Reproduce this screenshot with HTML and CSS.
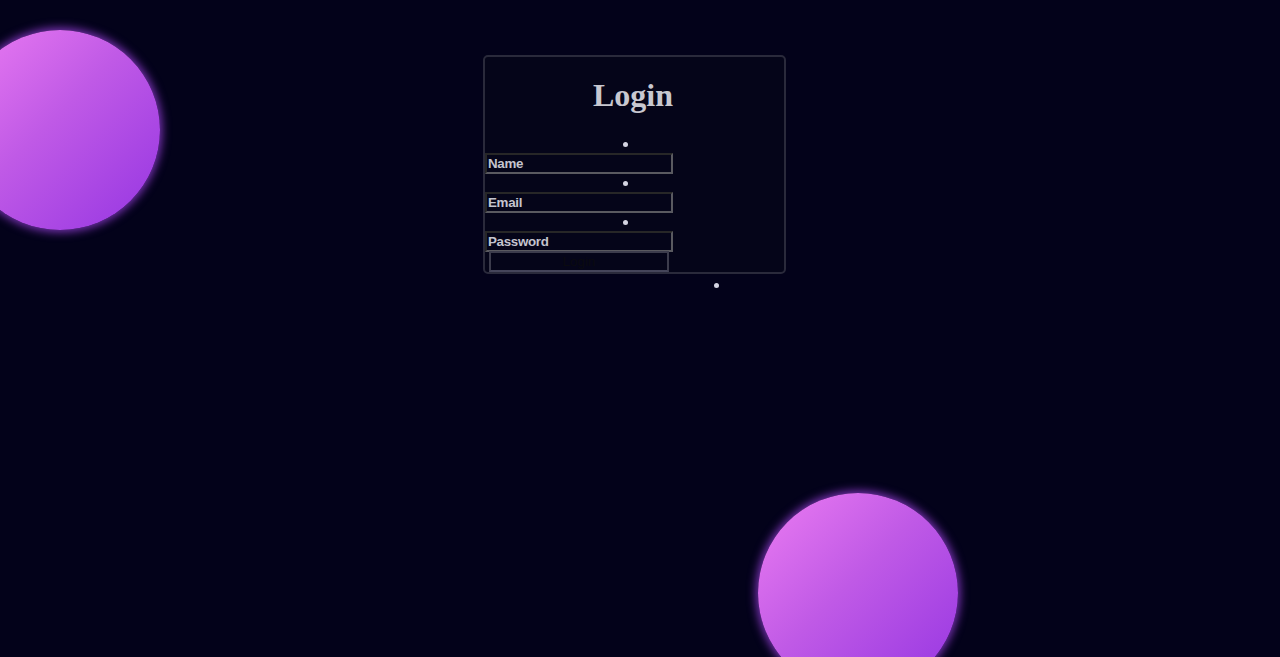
FILE: index.html
```html
<!DOCTYPE html>
<html lang="en">
<head>
<meta charset="utf-8">
<title>Login</title>
<link rel="stylesheet" href="styles.css">
</head>
<body>
  <div class="blob blob-top"></div>
  <div class="blob blob-bottom"></div>
  <main class="wrap">
    <form class="card">
      <h1 class="title">Login</h1>
      <ul class="fields">
        <li class="field"><input class="input" type="text" placeholder="Name"></li>
        <li class="field"><input class="input" type="email" placeholder="Email"></li>
        <li class="field"><input class="input" type="password" placeholder="Password"></li>
      </ul>
      <button class="btn" type="submit">Login</button>
    </form>
    <div class="tail"><span class="dot"></span></div>
  </main>
</body>
</html>
```

FILE: styles.css
```css
html, body {
  margin: 0;
  padding: 0;
}
body {
  background: #03021a;
  font-family: "Liberation Sans", Arial, sans-serif;
  color: #c4c4cc;
  min-height: 100vh;
  position: relative;
}
.blob {
  position: absolute;
  width: 200px;
  height: 200px;
  border-radius: 50%;
  background: linear-gradient(135deg, #ec7cf2 0%, #c05ae6 45%, #9535e2 100%);
  box-shadow: 0 0 10px 2px rgba(168, 70, 240, 0.75);
}
.blob-top {
  left: -40px;
  top: 30px;
}
.blob-bottom {
  left: 758px;
  top: 493px;
}
.wrap {
  position: relative;
  display: flex;
  flex-direction: column;
  align-items: center;
  padding-top: 55px;
  padding-right: 11px;
}
.card {
  width: 299px;
  border: 2px solid #2a2a3b;
  border-radius: 5px;
  background: #050519;
  display: flex;
  flex-direction: column;
  align-items: flex-start;
}
.title {
  align-self: stretch;
  margin: 20px 0 0;
  padding-right: 3px;
  text-align: center;
  font-family: "Liberation Serif", "Times New Roman", serif;
  font-weight: bold;
  font-size: 32px;
  line-height: 37px;
  color: #c8c8d0;
}
.fields {
  list-style: none;
  margin: 21px 0 0;
  padding: 0;
  align-self: stretch;
}
.field {
  display: flex;
  flex-direction: column;
  align-items: flex-start;
}
.field::before {
  content: "";
  display: block;
  width: 5px;
  height: 5px;
  border-radius: 50%;
  background: #d4d4e2;
  margin: 7px 0 6px 138px;
}
.input {
  box-sizing: border-box;
  width: 188px;
  height: 21px;
  margin: 0;
  padding: 0 1px;
  border: 2px solid;
  border-color: #272727 #5a5a60 #5a5a60 #272727;
  background: transparent;
  font-family: "Liberation Sans", Arial, sans-serif;
  font-weight: 600;
  font-size: 13.33px;
  letter-spacing: -0.3px;
  color: #c4c4ce;
  outline: none;
}
.input::placeholder {
  color: #c4c4ce;
  opacity: 1;
}
.btn {
  box-sizing: border-box;
  width: 180px;
  height: 21px;
  margin: -1px 0 0 4px;
  padding: 0;
  border: 2px solid #3c3c4c;
  border-bottom-color: #45455a;
  background: transparent;
  font-family: "Liberation Sans", Arial, sans-serif;
  font-size: 13.33px;
  color: #0a0a10;
}
.tail {
  width: 303px;
  margin-top: 9px;
  display: flex;
}
.dot {
  display: block;
  width: 5px;
  height: 5px;
  border-radius: 50%;
  background: #d4d4e2;
  margin-left: 231px;
}
```
